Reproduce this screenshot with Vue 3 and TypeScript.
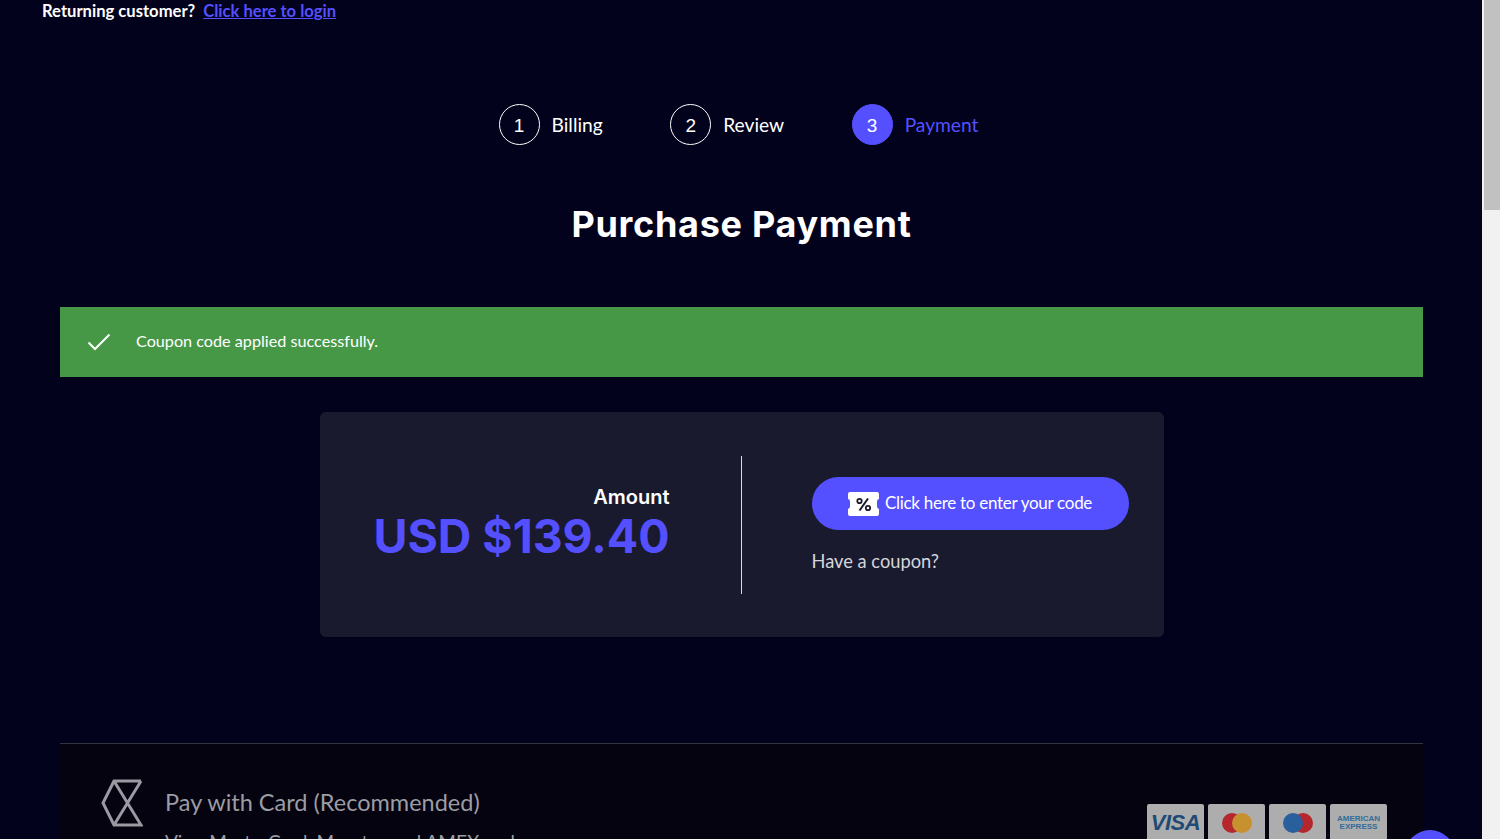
<template>
  <div class="page">
    <main class="main">
      <p class="returning">
        <strong>Returning customer?</strong>
        <a href="#" class="login-link">Click here to login</a>
      </p>

      <ol class="steps">
        <li v-for="s in steps" :key="s.num" class="step" :class="{ active: s.active }">
          <span class="step-num">{{ s.num }}</span>
          <span class="step-label">{{ s.label }}</span>
        </li>
      </ol>

      <h1 class="title">Purchase Payment</h1>

      <div class="notice">
        <svg class="check" viewBox="0 0 24 20" width="24" height="20" fill="none">
          <path d="M1.5 10.5 8 17 22.5 2.5" stroke="#fff" stroke-width="2" />
        </svg>
        <span>Coupon code applied successfully.</span>
      </div>

      <section class="amount-card">
        <div class="amount-side">
          <div class="amount-label">Amount</div>
          <div class="amount-value">USD $139.40</div>
        </div>
        <div class="divider"></div>
        <div class="coupon-side">
          <button class="coupon-btn">
            <svg class="ticket" viewBox="0 0 31 24" width="31" height="24">
              <path
                d="M2 0H29a2 2 0 0 1 2 2V7a2.5 2.5 0 0 0-2 2.5V14.5a2.5 2.5 0 0 0 2 2.5V22a2 2 0 0 1-2 2H2a2 2 0 0 1-2-2V17a2.5 2.5 0 0 0 2-2.5V9.5A2.5 2.5 0 0 0 0 7V2a2 2 0 0 1 2-2Z"
                fill="#fff"
              />
              <path d="M20 6.5 11.5 18.5" stroke="#1a1a2e" stroke-width="2" />
              <circle cx="11.5" cy="9" r="2.2" fill="none" stroke="#1a1a2e" stroke-width="1.8" />
              <circle cx="20" cy="16" r="2.2" fill="none" stroke="#1a1a2e" stroke-width="1.8" />
            </svg>
            <span class="coupon-text">Click here to enter your code</span>
          </button>
          <p class="coupon-hint">Have a coupon?</p>
        </div>
      </section>

      <section class="pay-panel">
        <svg class="pay-logo" viewBox="0 0 42 48" width="42" height="48" fill="none">
          <path d="M40 2H13L2 24l11 22h27L13 2M40 2 13 46" stroke="#9a9aa2" stroke-width="3" />
        </svg>
        <div class="pay-text">
          <div class="pay-title">Pay with Card (Recommended)</div>
          <div class="pay-sub">Visa, MasterCard, Maestro and AMEX and</div>
        </div>
        <div class="pay-cards">
          <div class="pay-card visa">VISA</div>
          <div class="pay-card">
            <svg viewBox="0 0 32 22" width="32" height="22">
              <circle cx="11" cy="11" r="10" fill="#b5262d" />
              <circle cx="21" cy="11" r="10" fill="#c8912f" />
            </svg>
          </div>
          <div class="pay-card">
            <svg viewBox="0 0 32 22" width="32" height="22">
              <circle cx="21" cy="11" r="10" fill="#b5262d" />
              <circle cx="11" cy="11" r="10" fill="#2a5f9e" />
            </svg>
          </div>
          <div class="pay-card amex">AMERICAN<br />EXPRESS</div>
        </div>
      </section>

      <div class="chat-bubble"></div>
    </main>
    <aside class="scrollbar"><div class="scroll-thumb"></div></aside>
  </div>
</template>

<script setup lang="ts">
const steps = [
  { num: 1, label: 'Billing', active: false },
  { num: 2, label: 'Review', active: false },
  { num: 3, label: 'Payment', active: true },
]
</script>

<style>
html,
body {
  margin: 0;
  overflow: hidden;
}
</style>

<style scoped>
.page {
  display: flex;
  height: 839px;
  overflow: hidden;
  font-family: Lato, 'Liberation Sans', sans-serif;
}

.main {
  position: relative;
  flex: 1;
  min-width: 0;
  padding: 0 59px 0 60px;
  background: #03021c;
  color: #fff;
  overflow: hidden;
}

.returning {
  margin: 0 0 0 -18px;
  height: 22px;
  line-height: 22px;
  font-size: 16.6px;
}
.returning strong {
  font-weight: 700;
  margin-right: 8px;
}
.login-link {
  color: #5550ff;
  font-weight: 700;
}

.steps {
  display: flex;
  justify-content: center;
  gap: 67.5px;
  list-style: none;
  margin: 82px 0 0;
  padding: 0 6px 0 0;
}
.step {
  display: flex;
  align-items: center;
  gap: 12px;
  font-size: 19.2px;
}
.step-num {
  box-sizing: border-box;
  width: 41px;
  height: 41px;
  padding-top: 2px;
  display: flex;
  align-items: center;
  justify-content: center;
  border: 1.5px solid #fff;
  border-radius: 50%;
  font-family: 'Liberation Sans', sans-serif;
  font-size: 19px;
}
.step.active .step-num {
  background: #5550ff;
  border-color: #5550ff;
}
.step.active .step-label {
  color: #5550ff;
}

.title {
  margin: 56px 0 0;
  height: 46px;
  line-height: 46px;
  text-align: center;
  font-family: Inter, sans-serif;
  font-size: 36px;
  font-weight: 700;
  letter-spacing: 0.7px;
}

.notice {
  display: flex;
  align-items: center;
  height: 70px;
  margin-top: 60px;
  padding-left: 27px;
  background: #469847;
  font-size: 16.2px;
}
.notice span {
  margin-top: -3px;
}
.check {
  margin-right: 25px;
}

.amount-card {
  display: flex;
  align-items: center;
  box-sizing: border-box;
  width: 844px;
  height: 225px;
  margin: 35px auto 0;
  background: #1a1a2e;
  border-radius: 6px;
}
.amount-side {
  flex: none;
  box-sizing: border-box;
  width: 421px;
  text-align: right;
  padding-right: 71px;
  margin-top: -2px;
}
.amount-label {
  font-family: Inter, sans-serif;
  font-size: 20px;
  font-weight: 600;
  line-height: 24px;
}
.amount-value {
  font-family: Inter, sans-serif;
  font-size: 46.4px;
  font-weight: 700;
  line-height: 54px;
  color: #5550ff;
}
.divider {
  flex: none;
  width: 1.5px;
  height: 138px;
  background: #d8d8e0;
}
.coupon-side {
  flex: 1;
  padding-left: 69.5px;
}
.coupon-btn {
  display: flex;
  align-items: center;
  justify-content: center;
  gap: 6px;
  width: 317px;
  height: 53px;
  margin-top: 1px;
  padding: 0;
  border: none;
  border-radius: 27px;
  background: #5550ff;
  color: #fff;
  font-family: Lato, sans-serif;
  font-size: 17px;
  letter-spacing: -0.28px;
}
.coupon-text {
  margin-top: -2px;
}
.coupon-hint {
  margin: 19px 0 0;
  line-height: 24px;
  font-size: 18.3px;
  color: #d4d6dc;
}

.pay-panel {
  display: flex;
  height: 120px;
  margin-top: 106px;
  padding: 35px 36px 0 41px;
  border-top: 1px solid #33333f;
  background: #04030f;
}
.pay-logo {
  flex: none;
}
.pay-text {
  flex: 1;
  padding: 9px 0 0 22px;
}
.pay-title {
  font-size: 23.5px;
  line-height: 28px;
  color: #9c9ca4;
}
.pay-sub {
  font-size: 19px;
  line-height: 26px;
  margin-top: 13px;
  color: #9c9ca4;
}
.pay-cards {
  display: flex;
  gap: 4px;
  margin-top: 25px;
}
.pay-card {
  display: flex;
  align-items: center;
  justify-content: center;
  width: 57px;
  height: 38px;
  border-radius: 2px;
  background: #adadad;
  text-align: center;
}
.visa {
  font-family: 'Liberation Sans', sans-serif;
  font-size: 22px;
  font-weight: 700;
  font-style: italic;
  letter-spacing: -0.5px;
  color: #1e4a75;
}
.amex {
  font-family: 'Liberation Sans', sans-serif;
  font-size: 8px;
  font-weight: 700;
  line-height: 8px;
  color: #2f6c99;
}

.chat-bubble {
  position: absolute;
  left: 1405px;
  top: 830px;
  width: 50px;
  height: 50px;
  border-radius: 50%;
  background: #5550ff;
}

.scrollbar {
  flex: none;
  box-sizing: border-box;
  width: 18px;
  padding-left: 2px;
  background: #f1f1f1;
}
.scroll-thumb {
  height: 210px;
  background: #c1c1c1;
}
</style>
